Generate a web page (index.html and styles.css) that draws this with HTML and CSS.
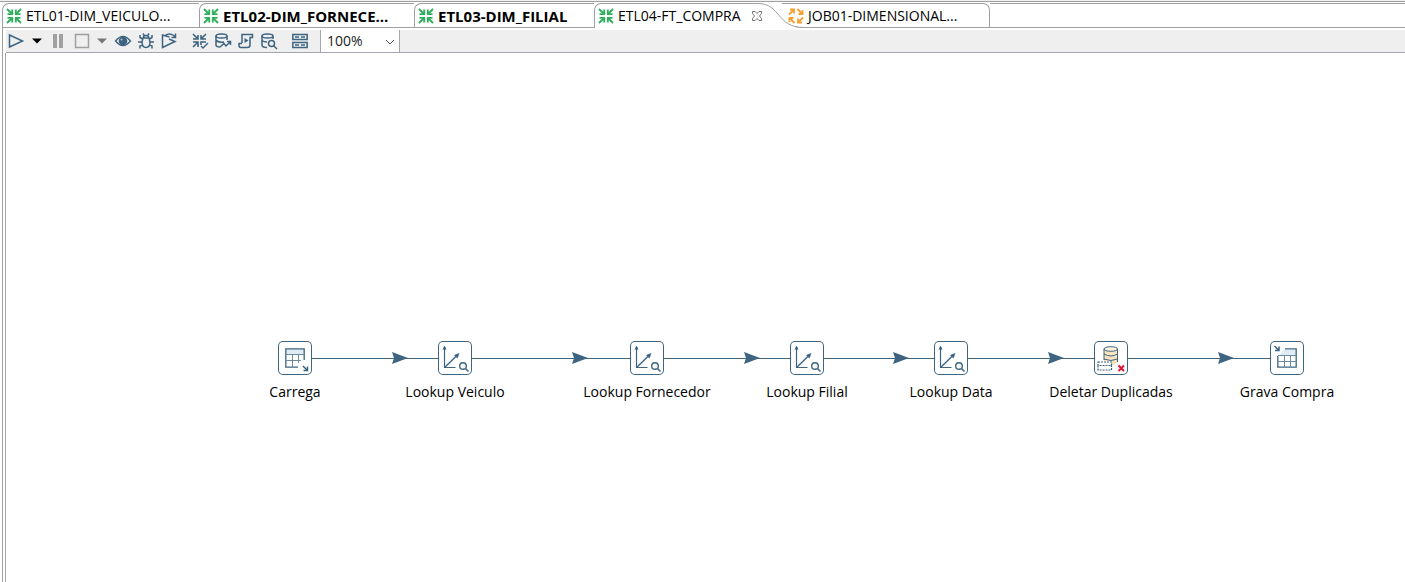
FILE: index.html
```
<!DOCTYPE html>
<html lang="pt-BR">
<head>
<meta charset="utf-8">
<title>ETL04-FT_COMPRA</title>
<link rel="stylesheet" href="styles.css">
</head>
<body>
<svg class="defs" aria-hidden="true">
  <defs>
    <symbol id="transf" viewBox="0 0 16 16"><path d="M1 1l5 5M15 1l-5 5M1 15l5-5M15 15l-5-5" stroke-width="1.8"/><path d="M1.500 6.200H6.200V1.500M14.500 6.200H9.800V1.500M1.500 9.800H6.200V14.500M14.500 9.800H9.800V14.500" stroke-width="1.800"/></symbol>
    <symbol id="job" viewBox="0 0 16 16"><path d="M1 6.500L5.500 2M9.500 1L14 5.500M15 9.500L10.500 14M6.500 15L2 10.500" stroke-width="1.800"/><path d="M2 1.500H6V5.500M10.500 6H14.500V2M14 14.500H10V10.500M5.500 10H1.500V14" stroke-width="1.800"/></symbol>
    <symbol id="lookup" viewBox="0 0 34 34"><path d="M6.500 6V27M7 26.500H17.500" stroke-width="1.200"/><path d="M4.500 8.500L6.500 4.500L8.500 8.500Z" fill="currentColor" stroke="none"/><path d="M7 26L19 14.500" stroke-width="1.400"/><path d="M21.500 12L16 14L19.500 17.500Z" fill="currentColor" stroke="none"/><circle cx="25" cy="25" r="3.300" stroke-width="1.400"/><path d="M27.500 27.500L30.500 30.500" stroke-width="1.500"/></symbol>
  </defs>
</svg>
<div class="app">
  <nav class="tabs">
    <button class="tab tab-veiculo"><svg class="icon green"><use href="#transf"/></svg>ETL01-DIM_VEICULO...</button>
    <button class="tab tab-fornecedor changed"><svg class="icon green"><use href="#transf"/></svg>ETL02-DIM_FORNECE...</button>
    <button class="tab tab-filial changed"><svg class="icon green"><use href="#transf"/></svg>ETL03-DIM_FILIAL</button>
    <div class="tab-current">
      <button class="tab active"><svg class="icon green"><use href="#transf"/></svg>ETL04-FT_COMPRA</button>
      <button class="close" aria-label="Fechar"><svg viewBox="0 0 12 12"><path d="M1.500 1.500H4L6 3.500L8 1.500H10.500V3.500L8.500 6L10.500 8.500V10.500H8L6 8.500L4 10.500H1.500V8.500L3.500 6L1.500 3.500Z"/></svg></button>
      <svg class="curve" viewBox="0 0 48 25"><path class="fill" d="M0 1H5C22 1 20 24.500 44 24.500V25H0Z"/><path d="M2 .5C25 .5 20 24.500 48 24.500"/></svg>
    </div>
    <button class="tab tab-job"><svg class="icon orange"><use href="#job"/></svg>JOB01-DIMENSIONAL...</button>
    <span class="tab-rest"></span>
  </nav>
  <main class="editor">
    <div class="toolbar">
      <button class="tool run" aria-label="Executar"><svg viewBox="0 0 16 16"><path d="M1.500 2L14.500 8L1.500 14Z"/></svg></button>
      <button class="arrow dark" aria-label="Opções de execução"><svg viewBox="0 0 10 6"><path d="M0 .5H10L5 5.500Z"/></svg></button>
      <button class="tool pause off" aria-label="Pausar"><svg viewBox="0 0 16 16"><path class="solid" d="M3 1H7V15H3ZM9 1H13V15H9Z"/></svg></button>
      <button class="tool stop off" aria-label="Parar"><svg viewBox="0 0 16 16"><path d="M1.500 1.500H14.500V14.500H1.500Z"/></svg></button>
      <button class="arrow" aria-label="Opções de parada"><svg viewBox="0 0 10 6"><path d="M0 .5H10L5 5.500Z"/></svg></button>
      <button class="tool eye" aria-label="Visualizar"><svg viewBox="0 0 16 16"><path d="M.5 8Q8-1 15.500 8Q8 17 .5 8Z" stroke-width="1.300"/><circle class="solid" cx="8" cy="8" r="4.300"/><circle cx="6.500" cy="6.500" r="1" fill="#a9bdcd" stroke="none"/></svg></button>
      <button class="tool" aria-label="Depurar"><svg viewBox="0 0 16 16"><path d="M5 5H11L12 9C12 13 10 14.500 8 14.500S4 13 4 9ZM5.500 5Q5 2.500 8 2.500T10.500 5M5 .5L6.500 3M11 .5L9.500 3M4.500 6L2 4.500V2M11.500 6L14 4.500V2M4 9H0M12 9H16M4.500 11.500L2 13V15.500M11.500 11.500L14 13V15.500" stroke-width="1.500"/></svg></button>
      <button class="tool" aria-label="Repetir"><svg viewBox="0 0 16 16"><path d="M8.500 4L1.500 2V14.500L14 8.500L8 6M4 2.500Q9-1 14 3.500M14.500 .5V4.500H10.500"/></svg></button>
      <button class="tool verify" aria-label="Verificar"><svg viewBox="0 0 16 16"><path d="M1 1L6 6M6 2V6H1M14 1L9 6M9 2V6H14M1 14L6 9M1 9H6V14M14 9H9V12" stroke-width="1.600"/><path d="M9 13L11 15L16 10" stroke-width="1.400"/></svg></button>
      <button class="tool" aria-label="Analisar impacto"><svg viewBox="0 0 16 16"><ellipse cx="6.500" cy="3" rx="5.500" ry="2"/><path d="M1 3V12Q1 14 5 14M12 3V7M1 7.500Q5 10 9 9M5 14L9 10.500L11 13L15 9M12 8.500H15.500V12"/></svg></button>
      <button class="tool" aria-label="Gerar SQL"><svg viewBox="0 0 16 16"><path d="M4 10V1.500H14.500V4.500H12V12Q12 14.500 9.500 14.500H3Q1 14.500 1 12.500V10.500H4"/><path class="solid" d="M6.500 5L10.500 7.500L6.500 10Z"/></svg></button>
      <button class="tool" aria-label="Explorar banco"><svg viewBox="0 0 16 16"><ellipse cx="6.500" cy="3" rx="5.500" ry="2"/><path d="M1 3V12Q1 14.500 6 14.500M12 3V6M1 7.500Q3 9 6 9"/><circle cx="10.500" cy="10.500" r="3"/><path d="M13 13L16 16"/></svg></button>
      <button class="tool results" aria-label="Mostrar resultados"><svg viewBox="0 0 16 16"><path d="M.8 1.500H15.200V6.500H.8ZM.8 9.500H15.200V14.500H.8Z"/><path d="M3 4H7M9 4H13M3 12H7M9 12H13" stroke-width="1.400"/></svg></button>
      <label class="zoom"><span class="sr">Zoom</span><select><option>100%</option></select><svg viewBox="0 0 10 6"><path d="M1 1L5 5L9 1"/></svg></label>
    </div>
    <div class="canvas">
      <svg class="hops" aria-hidden="true">
        <defs><path id="head" d="M0-6L16 0L0 6L2 0Z"/></defs>
        <path class="line" d="M306 305.500H1264"/>
        <use href="#head" x="386" y="305"/><use href="#head" x="566" y="305"/><use href="#head" x="738" y="305"/><use href="#head" x="887" y="305"/><use href="#head" x="1042" y="305"/><use href="#head" x="1212" y="305"/>
      </svg>
      <div class="step s1"><svg viewBox="0 0 34 34"><path d="M8 8H26V13H8Z" fill="#dfebf5" stroke="none"/><path d="M20 26.200H7.800V7.800H26.200V19" stroke-width="1.300"/><path d="M8 13.500H26M8 19.500H23M14.500 13V26M20.500 13V22" stroke="#6d8ba1"/><path d="M25 25L29.500 29.500M29.500 25.500V29.500H25.500" stroke-width="1.500"/></svg><span>Carrega</span></div>
      <div class="step s2"><svg><use href="#lookup"/></svg><span>Lookup Veiculo</span></div>
      <div class="step s3"><svg><use href="#lookup"/></svg><span>Lookup Fornecedor</span></div>
      <div class="step s4"><svg><use href="#lookup"/></svg><span>Lookup Filial</span></div>
      <div class="step s5"><svg><use href="#lookup"/></svg><span>Lookup Data</span></div>
      <div class="step s6"><svg viewBox="0 0 34 34"><path d="M10 8V22Q17 26 23.500 22V8" fill="#fae3bf" stroke="none"/><ellipse cx="16.800" cy="8" rx="6.800" ry="2.300" fill="#fff3df"/><path d="M10 8V19M23.500 8V21M10 13Q17 17 23.500 13M10 18Q17 21 23.500 18"/><path d="M3 20H18V30H3Z" fill="#fff" stroke="none"/><path d="M4 21H17.500V24.500H4ZM4 24.500V29H17.500V24.500" stroke-width="1.200" stroke-dasharray="2 1"/><path d="M24.500 24.500L30 30M30 24.500L24.500 30" stroke="#df1935" stroke-width="2"/></svg><span>Deletar Duplicadas</span></div>
      <div class="step s7"><svg viewBox="0 0 34 34"><path d="M14 9H26V14H9Z" fill="#dfebf5" stroke="none"/><path d="M15 7.800H26.200V26.200H7.800V15" stroke-width="1.300"/><path d="M8 14.500H26M8 20.500H26M14.500 14V26M20.500 14V26" stroke="#6d8ba1"/><path d="M4.500 5L9 9.500M9 5.500V9.500H5" stroke-width="1.500"/></svg><span>Grava Compra</span></div>
    </div>
  </main>
</div>
</body>
</html>
```
FILE: styles.css
```
* { box-sizing: border-box; }
body { margin: 0; background: #fff; color: #000; font: 14px/20px "Open Sans", "Noto Sans", sans-serif; }
button { margin: 0; padding: 0; border: 0; background: none; color: inherit; font: inherit; white-space: nowrap; }
svg { display: block; fill: none; stroke: currentColor; overflow: visible; }
.defs { position: absolute; width: 0; height: 0; }
.app { min-height: 100vh; display: flex; flex-direction: column; padding-left: 2px; border-top: 1px solid #f0f0f0; box-shadow: inset 0 1px #a0a0a0; }
.tabs { display: flex; height: 25px; margin-top: 2px; }
.tab { display: flex; align-items: center; gap: 4px; flex: none; height: 25px; padding-left: 3px; border: 1px solid #a0a0a0; border-right: 0; }
.tab:first-child { border-top-left-radius: 7px; }
.tab-veiculo { width: 197px; }
.tab-fornecedor { width: 215px; border-top-left-radius: 7px; }
.tab-filial { width: 180px; border-top-left-radius: 7px; }
.changed { font-size: 15px; font-weight: 700; }
.icon { width: 16px; height: 16px; flex: none; }
.green { color: #2bb05a; }
.orange { color: #f7a02f; }
.tab-current { display: flex; width: 188px; flex: none; position: relative; z-index: 1; }
.active { border-bottom: 0; border-top-left-radius: 7px; }
.tab-current::before { content: ""; position: absolute; left: 140px; right: 24px; top: 0; border-top: 1px solid #a0a0a0; }
.close { width: 12px; margin-left: 10px; color: #707070; }
.close svg { width: 12px; height: 12px; }
.curve { position: absolute; left: 162px; top: 0; width: 48px; height: 25px; color: #a0a0a0; z-index: -1; }
.curve .fill { fill: #fff; stroke: none; }
.tab-job { width: 208px; padding-left: 6px; border-left: 0; border-right: 1px solid #a0a0a0; border-top-right-radius: 7px; }
.tab-rest { flex: 1; border: solid #a0a0a0; border-width: 1px 0; }
.editor { display: flex; flex-direction: column; flex: 1; padding-left: 3px; border-left: 1px solid #a0a0a0; padding-top: 2px; }
.toolbar { display: flex; align-items: center; height: 23px; background: #efefef; border-bottom: 1px solid #a5a5ad; color: #3d6480; }
.tool { width: 16px; height: 16px; margin-right: 7px; flex: none; }
.tool svg { width: 16px; height: 16px; stroke-width: 1.5; }
.solid { fill: currentColor; stroke: none; }
.run { margin: 0 8px 0 2px; }
.arrow { width: 10px; margin-right: 8px; color: #777; }
.arrow svg { width: 10px; height: 6px; fill: currentColor; stroke: none; }
.dark { color: #000; }
.off { color: #a0a0a0; }
.pause { margin-right: 8px; }
.verify { margin-left: 8px; }
.results { margin-left: 8px; margin-right: 12px; }
.zoom { position: relative; height: 22px; border: solid #a5a5ad; border-width: 0 1px; }
.zoom select { appearance: none; display: block; width: 78px; height: 22px; padding: 0 24px 0 6px; border: 0; border-radius: 0; background: #fff; color: #222; font: inherit; }
.zoom svg { position: absolute; right: 4px; top: 9px; width: 10px; height: 6px; color: #555; pointer-events: none; }
.sr { position: absolute; width: 1px; height: 1px; overflow: hidden; clip-path: inset(50%); }
.canvas { position: relative; flex: 1; min-height: 360px; border-left: 1px solid #a5a5ad; margin-left: -1px; }
.hops { position: absolute; left: 0; top: 0; width: 100%; height: 100%; color: #3d6480; }
.hops use { fill: currentColor; stroke: none; }
.step { position: absolute; top: 288px; width: 160px; display: flex; flex-direction: column; align-items: center; gap: 7px; }
.step svg { width: 34px; height: 34px; color: #3d6480; background: #fff; border-radius: 5px; box-shadow: inset 0 0 0 1px #3d6480; }
.s1 { left: 209px; }
.s2 { left: 369px; }
.s3 { left: 561px; }
.s4 { left: 721px; }
.s5 { left: 865px; }
.s6 { left: 1025px; }
.s7 { left: 1201px; }
```
